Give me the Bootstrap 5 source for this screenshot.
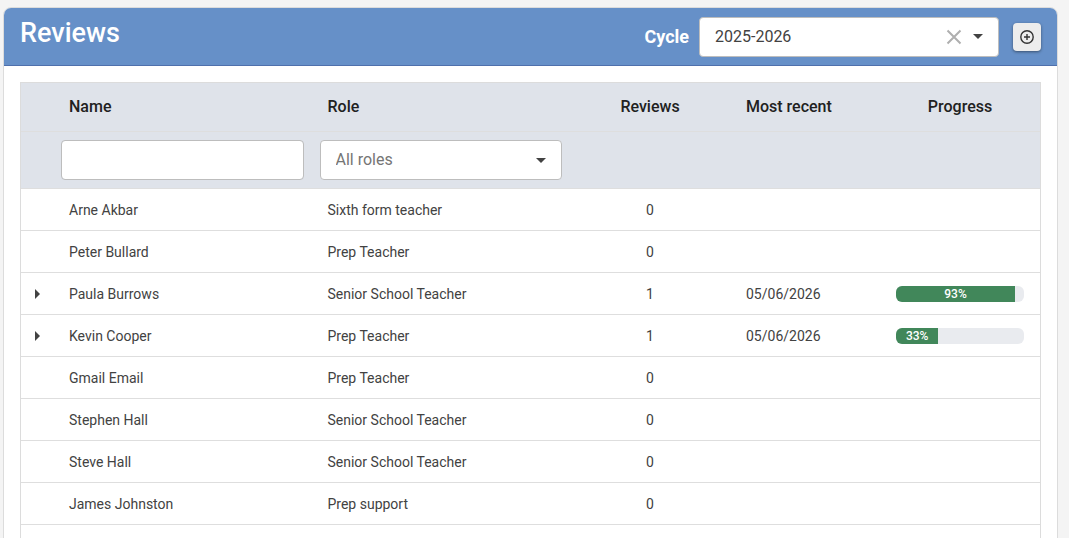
<!DOCTYPE html>
<html lang="en">
<head>
<meta charset="utf-8">
<meta name="viewport" content="width=device-width, initial-scale=1">
<title>Reviews</title>
<link href="https://cdn.jsdelivr.net/npm/bootstrap@5.3.0/dist/css/bootstrap.min.css" rel="stylesheet">
<style>
  body { background: #f4f4f4; color: #424242; font-family: Roboto, "Liberation Sans", sans-serif; font-size: 14px; line-height: 20px; }
  .page { padding: 7px 11px 0 3px; }
  .panel { border: 1px solid #dcdcdc; border-radius: 8px; background: #fff; min-height: 100vh; overflow: hidden; }
  .panel-head { background: #6690c8; border-bottom: 1px solid #4f70ac; color: #fff; height: 58px; padding: 0 16px; }
  .panel-title { font-size: 27px; line-height: 32px; font-weight: 500; padding-top: 9px; }
  .cycle-label { font-size: 18px; line-height: 24px; font-weight: 700; margin-right: 10px; }
  .cycle-box { width: 300px; margin-right: 14px; }
  .pick { height: 40px; border: 1px solid #bdbdbd; border-radius: 4px; padding: 0 15px; font-size: 16px; line-height: 24px; color: #424242; box-shadow: none; }
  select.pick {
    background-image: url("data:image/svg+xml,%3Csvg xmlns='http://www.w3.org/2000/svg' viewBox='0 0 10 5'%3E%3Cpath fill='%23424242' d='M0 0h10L5 5z'/%3E%3C/svg%3E");
    background-size: 10px 5px; background-position: right 15px center; }
  .pick-muted { color: #757575; }
  .clear-btn { right: 37px; top: 12px; width: 16px; height: 16px; color: #afafaf; }
  .add-btn { width: 28px; height: 28px; background: #ededed; border-radius: 4px; color: #333; box-shadow: 0 1px 3px rgba(0,0,0,.45); }
  .grid-wrap { margin: 16px; border: 1px solid #dcdcdc; border-bottom: 0; }
  .grid { table-layout: fixed; border-collapse: separate; border-spacing: 0; color: #424242; --bs-table-bg: transparent; }
  .grid > :not(caption) > * > * { border-bottom: 1px solid #dedede; padding: 0 16px; height: 42px; color: inherit; }
  .grid > thead { background: #dfe3ea; color: #212121; font-size: 16px; vertical-align: middle; }
  .grid > thead > tr > th { height: 49px; font-weight: 500; }
  .grid > thead > tr > td { height: 57px; padding: 0 8px; }
  .c-toggle { width: 32px; } .c-count { width: 160px; } .c-date { width: 150px; } .c-prog { width: 160px; }
  .toggle { width: 32px; height: 32px; color: #424242; }
  .grid > tbody > tr > td:first-child { padding: 0; }
  .bar { height: 16px; border-radius: 6px; background: #e9ebef; font-size: 12px; font-weight: 500; }
  .bar .progress-bar { background: #41875a; }
</style>
</head>
<body class="vh-100 overflow-hidden">
<main class="page">
  <section class="panel">
    <header class="panel-head d-flex justify-content-between align-items-start">
      <h1 class="panel-title m-0">Reviews</h1>
      <div class="d-flex align-items-center h-100">
        <label class="cycle-label" for="cycle">Cycle</label>
        <div class="cycle-box position-relative">
          <select id="cycle" class="form-select pick"><option>2025-2026</option></select>
          <button type="button" class="clear-btn btn p-0 border-0 d-flex position-absolute" aria-label="Clear cycle">
            <svg width="16" height="16" viewBox="0 0 16 16" fill="none" stroke="currentColor" stroke-width="2"><path d="M1.5 1.5l13 13M14.5 1.5l-13 13"/></svg>
          </button>
        </div>
        <button type="button" class="add-btn btn p-0 border-0 d-flex align-items-center justify-content-center" aria-label="Add review">
          <svg width="14" height="14" viewBox="0 0 14 14" fill="none" stroke="currentColor" stroke-width="1.4"><circle cx="7" cy="7" r="6.2"/><path d="M7 4v6M4 7h6"/></svg>
        </button>
      </div>
    </header>
    <div class="grid-wrap">
      <table class="grid table m-0 align-middle">
        <colgroup><col class="c-toggle"><col><col><col class="c-count"><col class="c-date"><col class="c-prog"></colgroup>
        <thead>
          <tr><th></th><th scope="col">Name</th><th scope="col">Role</th><th scope="col" class="text-center">Reviews</th><th scope="col">Most recent</th><th scope="col" class="text-center">Progress</th></tr>
          <tr><td></td>
            <td><input type="text" class="form-control pick" aria-label="Filter by name"></td>
            <td><select class="form-select pick pick-muted" aria-label="Filter by role"><option>All roles</option></select></td>
            <td></td><td></td><td></td></tr>
        </thead>
        <tbody>
          <tr><td></td><td>Arne Akbar</td><td>Sixth form teacher</td><td class="text-center">0</td><td></td><td></td></tr>
          <tr><td></td><td>Peter Bullard</td><td>Prep Teacher</td><td class="text-center">0</td><td></td><td></td></tr>
          <tr><td><button type="button" class="toggle btn p-0 border-0 d-flex align-items-center justify-content-center" aria-label="Expand Paula Burrows"><svg width="5" height="10" viewBox="0 0 5 10" fill="currentColor"><path d="M0 0l5 5-5 5z"/></svg></button></td>
            <td>Paula Burrows</td><td>Senior School Teacher</td><td class="text-center">1</td><td>05/06/2026</td>
            <td><div class="progress bar" role="progressbar" aria-label="Progress" aria-valuenow="93" aria-valuemin="0" aria-valuemax="100"><div class="progress-bar" style="width:93%">93%</div></div></td></tr>
          <tr><td><button type="button" class="toggle btn p-0 border-0 d-flex align-items-center justify-content-center" aria-label="Expand Kevin Cooper"><svg width="5" height="10" viewBox="0 0 5 10" fill="currentColor"><path d="M0 0l5 5-5 5z"/></svg></button></td>
            <td>Kevin Cooper</td><td>Prep Teacher</td><td class="text-center">1</td><td>05/06/2026</td>
            <td><div class="progress bar" role="progressbar" aria-label="Progress" aria-valuenow="33" aria-valuemin="0" aria-valuemax="100"><div class="progress-bar" style="width:33%">33%</div></div></td></tr>
          <tr><td></td><td>Gmail Email</td><td>Prep Teacher</td><td class="text-center">0</td><td></td><td></td></tr>
          <tr><td></td><td>Stephen Hall</td><td>Senior School Teacher</td><td class="text-center">0</td><td></td><td></td></tr>
          <tr><td></td><td>Steve Hall</td><td>Senior School Teacher</td><td class="text-center">0</td><td></td><td></td></tr>
          <tr><td></td><td>James Johnston</td><td>Prep support</td><td class="text-center">0</td><td></td><td></td></tr>
          <tr><td></td><td></td><td></td><td></td><td></td><td></td></tr>
        </tbody>
      </table>
    </div>
  </section>
</main>
<script src="https://cdn.jsdelivr.net/npm/bootstrap@5.3.0/dist/js/bootstrap.bundle.min.js"></script>
</body>
</html>
